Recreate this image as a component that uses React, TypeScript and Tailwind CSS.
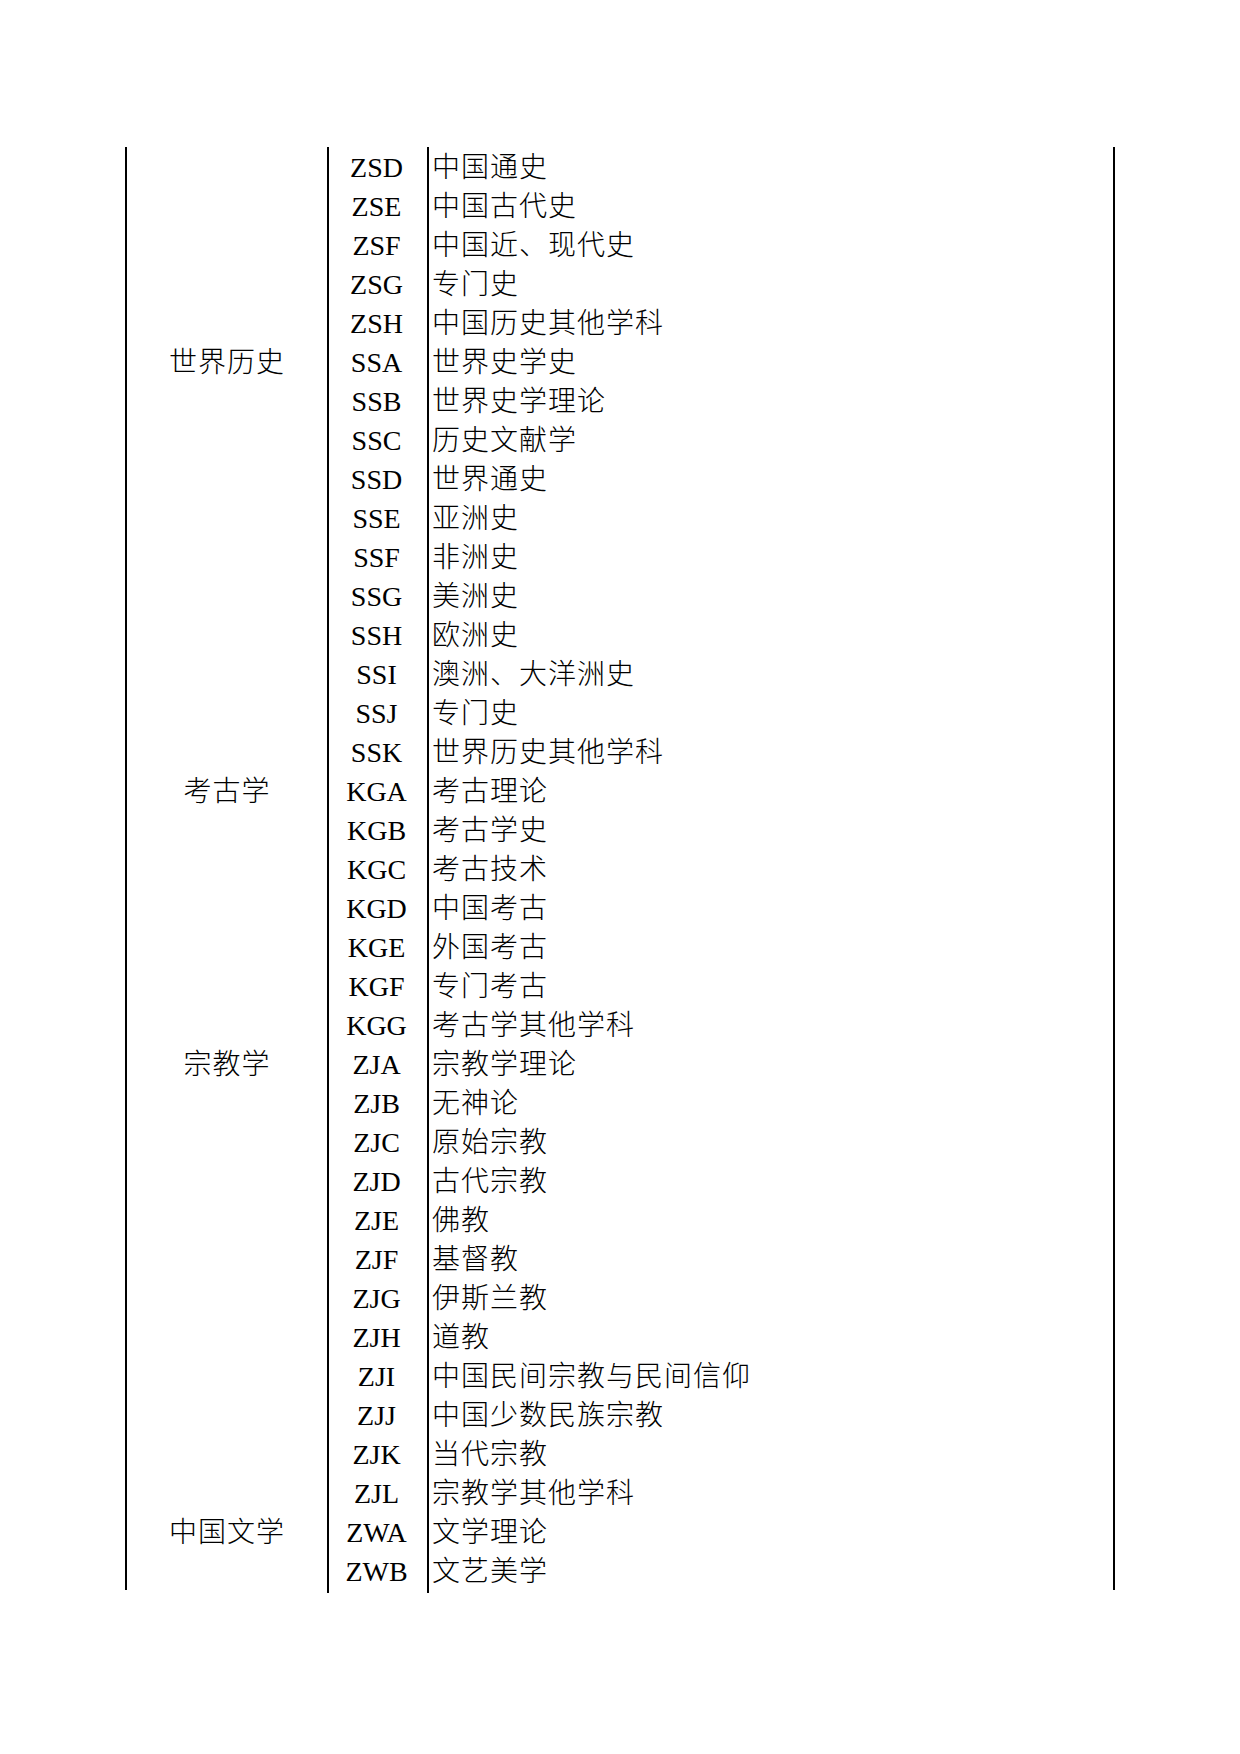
const rows: [string, string, string][] = [
  ['', 'ZSD', '中国通史'],
  ['', 'ZSE', '中国古代史'],
  ['', 'ZSF', '中国近、现代史'],
  ['', 'ZSG', '专门史'],
  ['', 'ZSH', '中国历史其他学科'],
  ['世界历史', 'SSA', '世界史学史'],
  ['', 'SSB', '世界史学理论'],
  ['', 'SSC', '历史文献学'],
  ['', 'SSD', '世界通史'],
  ['', 'SSE', '亚洲史'],
  ['', 'SSF', '非洲史'],
  ['', 'SSG', '美洲史'],
  ['', 'SSH', '欧洲史'],
  ['', 'SSI', '澳洲、大洋洲史'],
  ['', 'SSJ', '专门史'],
  ['', 'SSK', '世界历史其他学科'],
  ['考古学', 'KGA', '考古理论'],
  ['', 'KGB', '考古学史'],
  ['', 'KGC', '考古技术'],
  ['', 'KGD', '中国考古'],
  ['', 'KGE', '外国考古'],
  ['', 'KGF', '专门考古'],
  ['', 'KGG', '考古学其他学科'],
  ['宗教学', 'ZJA', '宗教学理论'],
  ['', 'ZJB', '无神论'],
  ['', 'ZJC', '原始宗教'],
  ['', 'ZJD', '古代宗教'],
  ['', 'ZJE', '佛教'],
  ['', 'ZJF', '基督教'],
  ['', 'ZJG', '伊斯兰教'],
  ['', 'ZJH', '道教'],
  ['', 'ZJI', '中国民间宗教与民间信仰'],
  ['', 'ZJJ', '中国少数民族宗教'],
  ['', 'ZJK', '当代宗教'],
  ['', 'ZJL', '宗教学其他学科'],
  ['中国文学', 'ZWA', '文学理论'],
  ['', 'ZWB', '文艺美学'],
]

export default function App() {
  return (
    <div
      className="min-h-[1754px] w-[1240px] bg-white pl-[125px] pt-[147px] text-[28px] font-light text-black"
      style={{ fontFamily: '"Liberation Serif", "Noto Sans CJK SC", serif' }}
    >
      <div className="w-[990px] border-x-2 border-black">
        {rows.map(([cat, code, name]) => (
          <div key={code} className="grid h-[39px] grid-cols-[200px_100px_1fr] leading-[42px]">
            <div className="text-center tracking-[1px]">{cat}</div>
            <div className="border-l-2 border-black pr-[3px] text-center">{code}</div>
            <div className="border-l-2 border-black pl-[3px] tracking-[1px]">{name}</div>
          </div>
        ))}
      </div>
    </div>
  )
}
